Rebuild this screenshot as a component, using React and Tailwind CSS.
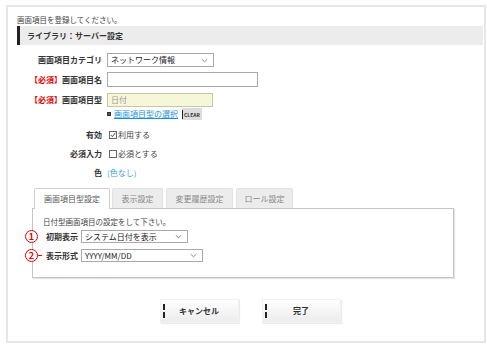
import React from 'react';

const font = { fontFamily: '"Noto Sans CJK JP", "Noto Sans", sans-serif' };

function Chevron() {
  return (
    <svg width="7" height="5" viewBox="0 0 7 5" className="shrink-0">
      <path d="M0.8 1.2 L3.5 3.8 L6.2 1.2" fill="none" stroke="#777" strokeWidth="0.9" />
    </svg>
  );
}

function Select({ value, width, height = 'h-[14px]' }) {
  return (
    <div className={`${width} ${height} flex items-center justify-between border border-[#a9a9a9] bg-white pl-[3px] pr-[5px] text-[8px] leading-none text-[#222]`}>
      <span>{value}</span>
      <Chevron />
    </div>
  );
}

function Row({ label, required, className = '', children }) {
  return (
    <div className={`flex items-center ${className}`}>
      <div className="w-[86px] shrink-0 pr-[1px] text-right text-[8px] font-bold leading-none text-[#333]">
        {required && <span className="text-[#e00000]">【必須】</span>}
        {label}
      </div>
      <div className="ml-[4px] flex items-center">{children}</div>
    </div>
  );
}

function Button({ children }) {
  return (
    <div className="flex h-[24px] w-[79px] items-center border border-[#f2f2f2] bg-gradient-to-b from-white to-[#ececec] shadow-[1px_1px_1px_rgba(0,0,0,0.08)]">
      <div className="ml-[2px] flex h-[14px] w-[2px] flex-col justify-between">
        <div className="h-[6px] bg-[#222]" />
        <div className="h-[6px] bg-[#222]" />
      </div>
      <div className="flex-1 pr-[4px] text-center text-[8px] font-bold text-[#333]">{children}</div>
    </div>
  );
}

function Badge({ n }) {
  return (
    <div className="absolute left-[-8px] top-0 flex h-[13px] w-[13px] items-center justify-center rounded-full border-[1.5px] border-[#e00000] bg-white text-[9px] font-bold leading-none text-[#e00000]">
      {n}
    </div>
  );
}

export default function App() {
  return (
    <div className="h-[345px] w-[487px] bg-white pl-[6px] pr-[1px] pt-[5px] pb-[2px]" style={font}>
      <div className="flex h-full flex-col border-2 border-[#e6e6e6] pl-[9px] pr-[1px]">
        <p className="mt-[7px] text-[7.5px] leading-[11px] text-[#444]">画面項目を登録してください。</p>

        <div className="mt-[1px] flex h-[19px] items-center border-l-[3px] border-[#222] bg-[#ececec] pl-[7px] text-[8px] font-bold text-[#333]">
          ライブラリ：サーバー設定
        </div>

        <Row label="画面項目カテゴリ" className="mt-[8px] h-[14px]">
          <Select value="ネットワーク情報" width="w-[107px]" />
        </Row>

        <Row label="画面項目名" required className="mt-[5px] h-[15px]">
          <div className="h-[15px] w-[151px] border border-[#a9a9a9] bg-white" />
        </Row>

        <Row label="画面項目型" required className="mt-[6px] h-[14px]">
          <div className="flex h-[14px] w-[106px] items-center border border-[#c8c8a8] bg-[#f6f6d8] pl-[3px] text-[8px] leading-none text-[#999]">
            日付
          </div>
        </Row>

        <div className="ml-[90px] mt-[1px] flex h-[12px] items-center">
          <div className="h-[4px] w-[4px] border border-[#333] bg-[#555]" />
          <span className="ml-[3px] text-[8px] leading-none text-[#1a8fd8] underline">画面項目型の選択</span>
          <div className="ml-[4px] flex h-[12px] w-[20px] items-center bg-[#dcdcdc]">
            <div className="h-[9px] w-[1px] bg-[#222]" />
            <span className="ml-[1px] text-[5px] font-bold leading-none text-[#333]">CLEAR</span>
          </div>
        </div>

        <Row label="有効" className="mt-[8px] h-[14px]">
          <div className="ml-[2px] flex items-center text-[8px] leading-none text-[#444]">
            <div className="flex h-[8px] w-[8px] items-center justify-center border border-[#666] bg-white">
              <svg width="6" height="6" viewBox="0 0 6 6">
                <path d="M0.8 3 L2.4 4.6 L5.4 0.8" fill="none" stroke="#333" strokeWidth="0.9" />
              </svg>
            </div>
            <span className="ml-[1px]">利用する</span>
          </div>
        </Row>

        <Row label="必須入力" className="mt-[5px] h-[14px]">
          <div className="ml-[2px] flex items-center text-[8px] leading-none text-[#444]">
            <div className="h-[8px] w-[8px] border border-[#666] bg-white" />
            <span className="ml-[1px]">必須とする</span>
          </div>
        </Row>

        <Row label="色" className="mt-[5px] h-[14px]">
          <span className="text-[8px] leading-none text-[#3a9fe0]">(色なし)</span>
        </Row>

        <div className="ml-[17px] mt-[8px] flex h-[20px] items-end text-[8px] leading-none">
          <div className="relative z-10 -mb-px flex h-[21px] w-[76px] items-center justify-center rounded-t-[2px] border border-b-0 border-[#cfcfcf] bg-white text-[#555]">
            画面項目型設定
          </div>
          <div className="ml-[2px] flex h-[20px] w-[51px] items-center justify-center rounded-t-[2px] border border-b-0 border-[#e2e2e2] bg-[#ececec] text-[#888]">
            表示設定
          </div>
          <div className="ml-[3px] flex h-[20px] w-[67px] items-center justify-center rounded-t-[2px] border border-b-0 border-[#e2e2e2] bg-[#ececec] text-[#888]">
            変更履歴設定
          </div>
          <div className="ml-[3px] flex h-[20px] w-[57px] items-center justify-center rounded-t-[2px] border border-b-0 border-[#e2e2e2] bg-[#ececec] text-[#888]">
            ロール設定
          </div>
        </div>

        <div className="ml-[15px] h-[70px] w-[422px] border border-[#c4c4c4] bg-white shadow-[1px_1px_1px_rgba(0,0,0,0.1)]">
          <p className="ml-[10px] mt-[7px] text-[7.5px] leading-[11px] text-[#444]">日付型画面項目の設定をして下さい。</p>

          <div className="relative mt-[3px] flex h-[13px] items-center">
            <Badge n="1" />
            <div className="w-[45px] text-right text-[8px] font-bold leading-none text-[#333]">初期表示</div>
            <div className="ml-[3px]">
              <Select value="システム日付を表示" width="w-[107px]" height="h-[13px]" />
            </div>
          </div>

          <div className="relative mt-[6px] flex h-[13px] items-center">
            <Badge n="2" />
            <div className="absolute left-[5px] top-[6px] h-[1px] w-[4px] bg-[#e00000]" />
            <div className="w-[45px] text-right text-[8px] font-bold leading-none text-[#333]">表示形式</div>
            <div className="ml-[3px]">
              <Select value="YYYY/MM/DD" width="w-[122px]" height="h-[13px]" />
            </div>
          </div>
        </div>

        <div className="mt-[21px] flex justify-center gap-[23px]">
          <Button>キャンセル</Button>
          <Button>完了</Button>
        </div>
      </div>
    </div>
  );
}
